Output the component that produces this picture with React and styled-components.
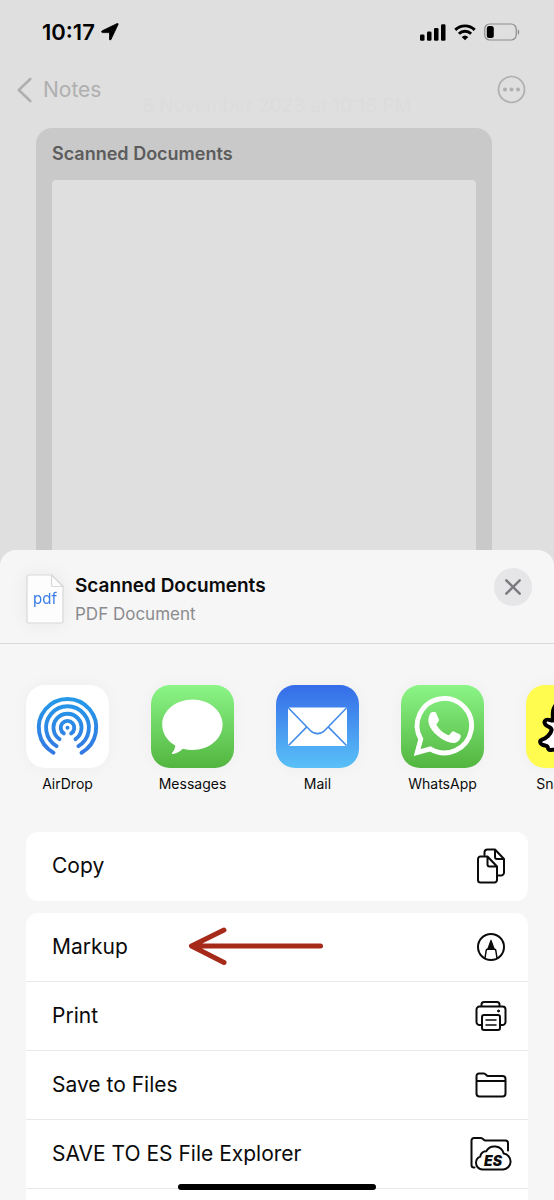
import React from 'react';
import styled, { createGlobalStyle } from 'styled-components';

const Global = createGlobalStyle`
  *, *::before, *::after { box-sizing: border-box; }
  html, body { margin: 0; height: 100%; }
  body {
    background: #f6f6f6;
    color: #0b0b0b;
    font-family: Inter, "Liberation Sans", sans-serif;
    -webkit-font-smoothing: antialiased;
  }
  #root { height: 100%; }
  h1, h2, p, ul { margin: 0; padding: 0; }
  ul { list-style: none; }
  button { border: 0; padding: 0; background: none; font: inherit; color: inherit; cursor: pointer; }
  svg { display: block; flex: none; }
`;

const Screen = styled.div`
  position: relative;
  height: 100vh;
  overflow: hidden;
  background: #dfdfdf;
`;

const StatusBar = styled.div`
  display: flex;
  align-items: center;
  justify-content: space-between;
  height: 64px;
  padding: 0 34px 0 42px;
`;

const StatusGroup = styled.div`
  display: flex;
  align-items: center;
  gap: ${(p) => p.$gap}px;
`;

const Time = styled.time`
  font-size: 22px;
  line-height: 24px;
  font-weight: 600;
  color: #000;
`;

const NavBar = styled.nav`
  display: flex;
  align-items: center;
  justify-content: space-between;
  height: 51px;
  padding: 0 28px 0 16px;
  color: #afafaf;
`;

const BackLink = styled.a`
  display: flex;
  align-items: center;
  gap: 10px;
  font-size: 21px;
  line-height: 28px;
  color: inherit;
  text-decoration: none;
`;

const NoteDate = styled.p`
  height: 12px;
  margin-top: -19px;
  margin-bottom: 20px;
  text-align: center;
  font-size: 19px;
  line-height: 20px;
  color: #dcdcdc;
`;

const ScanCard = styled.section`
  margin: 0 62px 0 36px;
  padding: 13px 16px 0;
  border-radius: 16px 16px 0 0;
  background: #c9c9c9;
`;

const ScanTitle = styled.h1`
  font-size: 18px;
  line-height: 26px;
  font-weight: 600;
  color: #5c5c5c;
`;

const ScanPage = styled.div`
  min-height: 390px;
  margin-top: 13px;
  border-radius: 4px 4px 0 0;
  background: #dfdfdf;
`;

const Sheet = styled.section`
  position: relative;
  margin-top: -20px;
  border-radius: 16px 16px 0 0;
  background: #f6f6f6;
`;

const SheetHeader = styled.header`
  display: flex;
  align-items: center;
  height: 94px;
  padding: 0 22px 0 26px;
  border-bottom: 1px solid #dadadb;
`;

const FileBadge = styled.div`
  display: grid;
  margin-top: 4px;
  filter: drop-shadow(0 0 8px rgba(0, 0, 0, 0.06));
  > * { grid-area: 1 / 1; }
  > span {
    align-self: center;
    justify-self: center;
    font-size: 15px;
    line-height: 18px;
    color: #3b7de8;
  }
`;

const SheetHeading = styled.div`
  flex: 1;
  margin-left: 11px;
  padding-top: 6px;
`;

const SheetTitle = styled.h2`
  font-size: 19px;
  line-height: 26px;
  font-weight: 600;
  color: #0b0b0b;
`;

const SheetSubtitle = styled.p`
  margin-top: 2px;
  font-size: 17px;
  line-height: 26px;
  color: #8b8b8e;
`;

const CloseButton = styled.button`
  display: grid;
  place-items: center;
  width: 38px;
  height: 38px;
  margin-bottom: 20px;
  border-radius: 50%;
  background: #e6e6e8;
`;

const AppRow = styled.ul`
  display: flex;
  gap: 26px;
  padding: 41px 0 38px 18px;
  overflow: hidden;
`;

const AppButton = styled.button`
  display: flex;
  flex-direction: column;
  align-items: center;
  gap: 6px;
  width: 99px;
  font-size: 14px;
  line-height: 20px;
`;

const AppTile = styled.span`
  display: grid;
  place-items: center;
  width: 83px;
  height: 83px;
  border-radius: 19px;
  background: ${(p) => p.$fill};
  box-shadow: 0 0 16px rgba(0, 0, 0, 0.04);
`;

const ActionGroup = styled.ul`
  margin: 0 26px 12px;
  border-radius: 12px;
  background: #fff;
  overflow: hidden;
`;

const ActionItem = styled.li`
  border-bottom: 1px solid #e9e9ea;
  &:last-child { border-color: transparent; }
`;

const ActionButton = styled.button`
  display: flex;
  align-items: center;
  width: 100%;
  height: 68px;
  padding: 0 16px 0 26px;
  font-size: 21px;
  line-height: 26px;
  text-align: left;
`;

const ActionIcon = styled.span`
  display: grid;
  place-items: center;
  width: 42px;
  margin-left: auto;
`;

const Pointer = styled.span`
  margin-left: 60px;
`;

const HomeIndicator = styled.div`
  position: absolute;
  bottom: 10px;
  left: 50%;
  width: 198px;
  height: 6px;
  border-radius: 3px;
  background: #000;
  transform: translateX(-50%);
`;

const stroke = { fill: 'none', stroke: '#0b0b0b', strokeWidth: 2, strokeLinecap: 'round', strokeLinejoin: 'round' };

const LocationIcon = () => (
  <svg width="18" height="18" viewBox="0 0 18 18" aria-hidden="true">
    <path d="M1.200 7.800 16.200.5c.7-.3 1.200.2.9.9L10 16.400c-.5 1-1.500.8-1.500-.3V9.600H1.700C.4 9.600.1 8.400 1.200 7.800Z" stroke="#000" strokeWidth="0.800" strokeLinejoin="round" />
  </svg>
);

const SignalIcon = () => (
  <svg width="26" height="17" viewBox="0 0 26 17" aria-hidden="true">
    <rect x="0" y="10.500" width="4.500" height="6.200" rx="1.300" />
    <rect x="7" y="7.500" width="4.500" height="9.200" rx="1.300" />
    <rect x="14" y="4" width="4.500" height="12.700" rx="1.300" />
    <rect x="21" y="0.300" width="4.500" height="16.400" rx="1.300" />
  </svg>
);

const WifiIcon = () => (
  <svg width="22" height="17" viewBox="0 0 22 17" aria-hidden="true">
    <g fill="none" stroke="#000" strokeWidth="2.900">
      <path d="M1.300 5.900a13.800 13.800 0 0 1 19.400 0" />
      <path d="M4.900 9.700a8.700 8.700 0 0 1 12.200 0" />
    </g>
    <path d="M11 16.300 7.700 13a4.800 4.800 0 0 1 6.600 0Z" />
  </svg>
);

const BatteryIcon = () => (
  <svg width="36" height="18" viewBox="0 0 36 18" aria-hidden="true">
    <rect x="0.700" y="1" width="31.500" height="16" rx="5" fill="none" stroke="#8c8c8c" strokeWidth="1.200" />
    <rect x="2.800" y="3" width="7" height="12" rx="2.500" />
    <path d="M33.800 6.200c1.900.8 1.900 4.800 0 5.600Z" fill="#8c8c8c" />
  </svg>
);

const BackIcon = () => (
  <svg width="17" height="26" viewBox="0 0 17 26" fill="none" stroke="#afafaf" strokeWidth="2.600" strokeLinecap="round" strokeLinejoin="round" aria-hidden="true">
    <path d="M14.300 2 2.800 13l11.500 11" />
  </svg>
);

const MoreIcon = () => (
  <svg width="29" height="29" viewBox="0 0 29 29" aria-hidden="true">
    <circle cx="14.500" cy="14.500" r="13" fill="none" stroke="#afafaf" strokeWidth="1.700" />
    <g fill="#afafaf">
      <circle cx="8" cy="14.500" r="2" />
      <circle cx="14.500" cy="14.500" r="2" />
      <circle cx="21" cy="14.500" r="2" />
    </g>
  </svg>
);

const PageIcon = () => (
  <svg width="38" height="50" viewBox="0 0 38 50" fill="#fdfdfd" stroke="#d8d8da" strokeWidth="1.200" strokeLinejoin="round" aria-hidden="true">
    <path d="M2.500 1H25.500L37 12.500V47.500a1.500 1.500 0 0 1-1.500 1.500H2.500A1.500 1.500 0 0 1 1 47.500V2.500A1.500 1.500 0 0 1 2.500 1Z" />
    <path d="M25.500 1V10.500a2 2 0 0 0 2 2H37Z" />
  </svg>
);

const CloseIcon = () => (
  <svg width="18" height="18" viewBox="0 0 18 18" stroke="#7c7c80" strokeWidth="2.500" strokeLinecap="round" aria-hidden="true">
    <path d="M2.300 2.300l13.400 13.400M15.700 2.300 2.300 15.700" />
  </svg>
);

const AirDropIcon = () => (
  <svg width="83" height="83" viewBox="0 0 83 83" aria-hidden="true">
    <defs>
      <linearGradient id="airdrop" gradientUnits="userSpaceOnUse" x1="0" y1="12" x2="0" y2="71">
        <stop offset="0" stopColor="#249ae8" />
        <stop offset="1" stopColor="#3477e2" />
      </linearGradient>
    </defs>
    <circle cx="41.500" cy="42.700" r="2" fill="url(#airdrop)" />
    <g fill="none" stroke="url(#airdrop)" strokeWidth="3.900" strokeLinecap="round">
      <path d="M37.800 48.400a6.800 6.800 0 1 1 7.400 0" />
      <path d="M33.500 54.200a14 14 0 1 1 16 0" />
      <path d="M30.600 61.100a21.400 21.400 0 1 1 21.800 0" />
      <path d="M27.500 67.700a28.700 28.700 0 1 1 28 0" />
    </g>
  </svg>
);

const MessagesIcon = () => (
  <svg width="83" height="83" viewBox="0 0 83 83" fill="#fff" aria-hidden="true">
    <path d="M41.500 14.500c-16.700 0-30.300 11.200-30.300 25.200 0 8.800 5.200 16.300 13.100 20.800-.2 3.300-1.700 5.600-3.300 7.600-.6.800.1 1.100.9.900 4.200-.8 7.600-2.800 9.900-5.300 3 .8 6.300 1.200 9.700 1.200 16.700 0 30.100-11.200 30.100-25.200S58.200 14.500 41.500 14.500Z" />
  </svg>
);

const MailIcon = () => (
  <svg width="83" height="83" viewBox="0 0 83 83" aria-hidden="true">
    <rect x="12" y="22.500" width="59" height="38.500" rx="1.500" fill="#fff" />
    <g fill="none" stroke="#438be9" strokeWidth="1.600">
      <path d="m12.500 23 21.800 22.500c4 4.200 10.400 4.200 14.400 0L70.500 23" />
      <path d="m12.500 60.500 18.300-18.600M70.500 60.500 52.200 41.900" />
    </g>
  </svg>
);

const WhatsAppIcon = () => (
  <svg width="83" height="83" viewBox="0 0 83 83" aria-hidden="true">
    <path fill="none" stroke="#fff" strokeWidth="4.800" strokeLinejoin="miter" d="M16.200 67.500 19.800 54.200A27.200 27.200 0 1 1 29.300 63.900Z" />
    <path fill="#fff" d="M29.800 27.700c.7-.7 1.500-.8 2.400-.8h1.300c.6 0 1.200.2 1.600 1.100l2.700 6.300c.3.700.2 1.400-.2 2l-1.600 2.200c-.6.700-.7 1.200-.2 2 2.600 4.500 6.400 7.500 11 9.600.7.300 1.200.2 1.700-.3l2.500-3c.5-.6 1.100-.7 1.900-.4l5.700 2.800c.8.400 1.200.8 1.100 1.800-.3 4.300-3.600 7-7.500 7-4.600 0-12.300-3.700-17.300-8.700-3.900-3.900-7.500-8.600-7.500-13.900 0-3 .9-5.800 2.400-7.700Z" />
  </svg>
);

const SnapchatIcon = () => (
  <svg width="83" height="83" viewBox="0 0 83 83" aria-hidden="true">
    <path fill="#fff" stroke="#000" strokeWidth="4" strokeLinejoin="round" d="M41.500 14.500c-9.500 0-14.700 7-14.700 14.500v6.500c-1.800.4-4.700-1.700-6.800-.6-2.600 1.500-1.500 4.700 1.200 6.100 2 1 4.600 1.700 4.400 4-.9 4.600-5.600 8.300-9.500 9.600-3 1-2.300 4.300.9 5.400 2.300.8 4.200.6 4.700 2 .4 1.600.4 3 2.500 3 2.300 0 4.800-1 7.800.2 3.200 1.600 5.300 4.100 9.500 4.100s6.300-2.500 9.500-4.100c3-1.200 5.500-.2 7.800-.2 2.100 0 2.100-1.400 2.500-3 .5-1.400 2.400-1.200 4.700-2 3.200-1.100 3.900-4.400.9-5.400-3.900-1.300-8.600-5-9.500-9.600-.2-2.300 2.400-3 4.400-4 2.700-1.400 3.800-4.600 1.200-6.100-2.100-1.100-5 1-6.800.6v-6.500c0-7.500-5.200-14.500-14.700-14.500Z" />
  </svg>
);

const CopyIcon = () => (
  <svg width="30" height="36" viewBox="0 0 30 36" {...stroke} aria-hidden="true">
    <path d="M8.500 7V4.500a3 3 0 0 1 3-3H19L28 11V24.500a3 3 0 0 1-3 3H22.500M19 1.500V9a2 2 0 0 0 2 2h7" />
    <path d="M4.500 8.500H11.500L21 18.500V32a2.500 2.500 0 0 1-2.500 2.500h-14A2.500 2.500 0 0 1 2 32V11a2.500 2.500 0 0 1 2.500-2.500ZM11.500 8.500v8a2 2 0 0 0 2 2H21" />
  </svg>
);

const MarkupIcon = () => (
  <svg width="30" height="30" viewBox="0 0 30 30" {...stroke} aria-hidden="true">
    <circle cx="15" cy="15" r="13" />
    <path d="M9 26 10.200 18.500q.2-1 1-1.200h7.600q.8.200 1 1.200L21 26" strokeWidth="1.500" />
    <path d="M11 17.400 14.500 8q.5-1 1 0l3.500 9.400Z" fill="#0b0b0b" stroke="none" />
  </svg>
);

const PrintIcon = () => (
  <svg width="32" height="32" viewBox="0 0 32 32" {...stroke} aria-hidden="true">
    <path d="M6.500 6V4.500A2.500 2.500 0 0 1 9 2H22a2.500 2.500 0 0 1 2.500 2.500V6" />
    <path d="M6.500 25H4.500A3 3 0 0 1 1.500 22V9.500a3 3 0 0 1 3-3h23a3 3 0 0 1 3 3V22a3 3 0 0 1-3 3H25" />
    <rect x="7" y="15" width="18" height="15" rx="2" />
    <path d="M11 20H21M11 25H21" strokeWidth="1.500" />
    <circle cx="23.500" cy="11" r="1" fill="#0b0b0b" strokeWidth="1" />
  </svg>
);

const FolderIcon = () => (
  <svg width="32" height="26" viewBox="0 0 32 26" {...stroke} aria-hidden="true">
    <path d="M1.500 9V4a2.500 2.500 0 0 1 2.500-2.500H9c1.700 0 2.300 2.500 4 2.500H27.500a3 3 0 0 1 3 3V21.500a3 3 0 0 1-3 3H4.500a3 3 0 0 1-3-3V9H30.500" />
  </svg>
);

const ExplorerIcon = () => (
  <svg width="42" height="36" viewBox="0 0 42 36" {...stroke} aria-hidden="true">
    <path d="M4.500 31.500H4a2.500 2.500 0 0 1-2.500-2.500V4.500A2.500 2.500 0 0 1 4 2H11c2 0 2.500 2.500 4.500 2.500H35.500A2.500 2.500 0 0 1 38 7V14.500" />
    <path d="M12.500 33.500a6.700 6.700 0 0 1-6.500-6.700c0-3 1.800-5.300 4.300-6.200a5.500 5.500 0 0 1 5.900-5.300 9.500 9.500 0 0 1 17.500 2.300 8 8 0 0 1-.5 15.900Z" />
    <text x="23" y="30" textAnchor="middle" fill="#0b0b0b" stroke="none" fontSize="14" fontWeight="900" fontStyle="italic">ES</text>
  </svg>
);

const ArrowMark = () => (
  <svg width="136" height="40" viewBox="0 0 136 40" fill="none" stroke="#a52a1a" strokeWidth="5" strokeLinecap="round" strokeLinejoin="round" aria-hidden="true">
    <path d="M132.500 19H4M36 3 3.500 19 36 35.500" />
  </svg>
);

const green = 'linear-gradient(#8bf587, #52b53f)';

const apps = [
  { name: 'AirDrop', fill: '#fff', Icon: AirDropIcon },
  { name: 'Messages', fill: green, Icon: MessagesIcon },
  { name: 'Mail', fill: 'linear-gradient(#356ce8, #59c1f7)', Icon: MailIcon },
  { name: 'WhatsApp', fill: green, Icon: WhatsAppIcon },
  { name: 'Snapchat', fill: '#fffc4f', Icon: SnapchatIcon },
];

const actionGroups = [
  [{ name: 'Copy', Icon: CopyIcon }],
  [
    { name: 'Markup', Icon: MarkupIcon, marked: true },
    { name: 'Print', Icon: PrintIcon },
    { name: 'Save to Files', Icon: FolderIcon },
    { name: 'SAVE TO ES File Explorer', Icon: ExplorerIcon },
    { name: '' },
  ],
];

export default function App() {
  return (
    <Screen>
      <Global />
      <StatusBar>
        <StatusGroup $gap={6}>
          <Time>10:17</Time>
          <LocationIcon />
        </StatusGroup>
        <StatusGroup $gap={8}>
          <SignalIcon />
          <WifiIcon />
          <BatteryIcon />
        </StatusGroup>
      </StatusBar>
      <NavBar>
        <BackLink href="#notes"><BackIcon />Notes</BackLink>
        <button type="button" aria-label="More"><MoreIcon /></button>
      </NavBar>
      <NoteDate>6 November 2023 at 10:16 PM</NoteDate>
      <ScanCard>
        <ScanTitle>Scanned Documents</ScanTitle>
        <ScanPage />
      </ScanCard>
      <Sheet>
        <SheetHeader>
          <FileBadge><PageIcon /><span>pdf</span></FileBadge>
          <SheetHeading>
            <SheetTitle>Scanned Documents</SheetTitle>
            <SheetSubtitle>PDF Document</SheetSubtitle>
          </SheetHeading>
          <CloseButton type="button" aria-label="Close"><CloseIcon /></CloseButton>
        </SheetHeader>
        <AppRow>
          {apps.map(({ name, fill, Icon }) => (
            <li key={name}>
              <AppButton type="button">
                <AppTile $fill={fill}><Icon /></AppTile>
                {name}
              </AppButton>
            </li>
          ))}
        </AppRow>
        {actionGroups.map((group) => (
          <ActionGroup key={group[0].name}>
            {group.map(({ name, Icon, marked }) => (
              <ActionItem key={name}>
                <ActionButton type="button">
                  {name}
                  {marked && <Pointer><ArrowMark /></Pointer>}
                  {Icon && <ActionIcon><Icon /></ActionIcon>}
                </ActionButton>
              </ActionItem>
            ))}
          </ActionGroup>
        ))}
      </Sheet>
      <HomeIndicator />
    </Screen>
  );
}
